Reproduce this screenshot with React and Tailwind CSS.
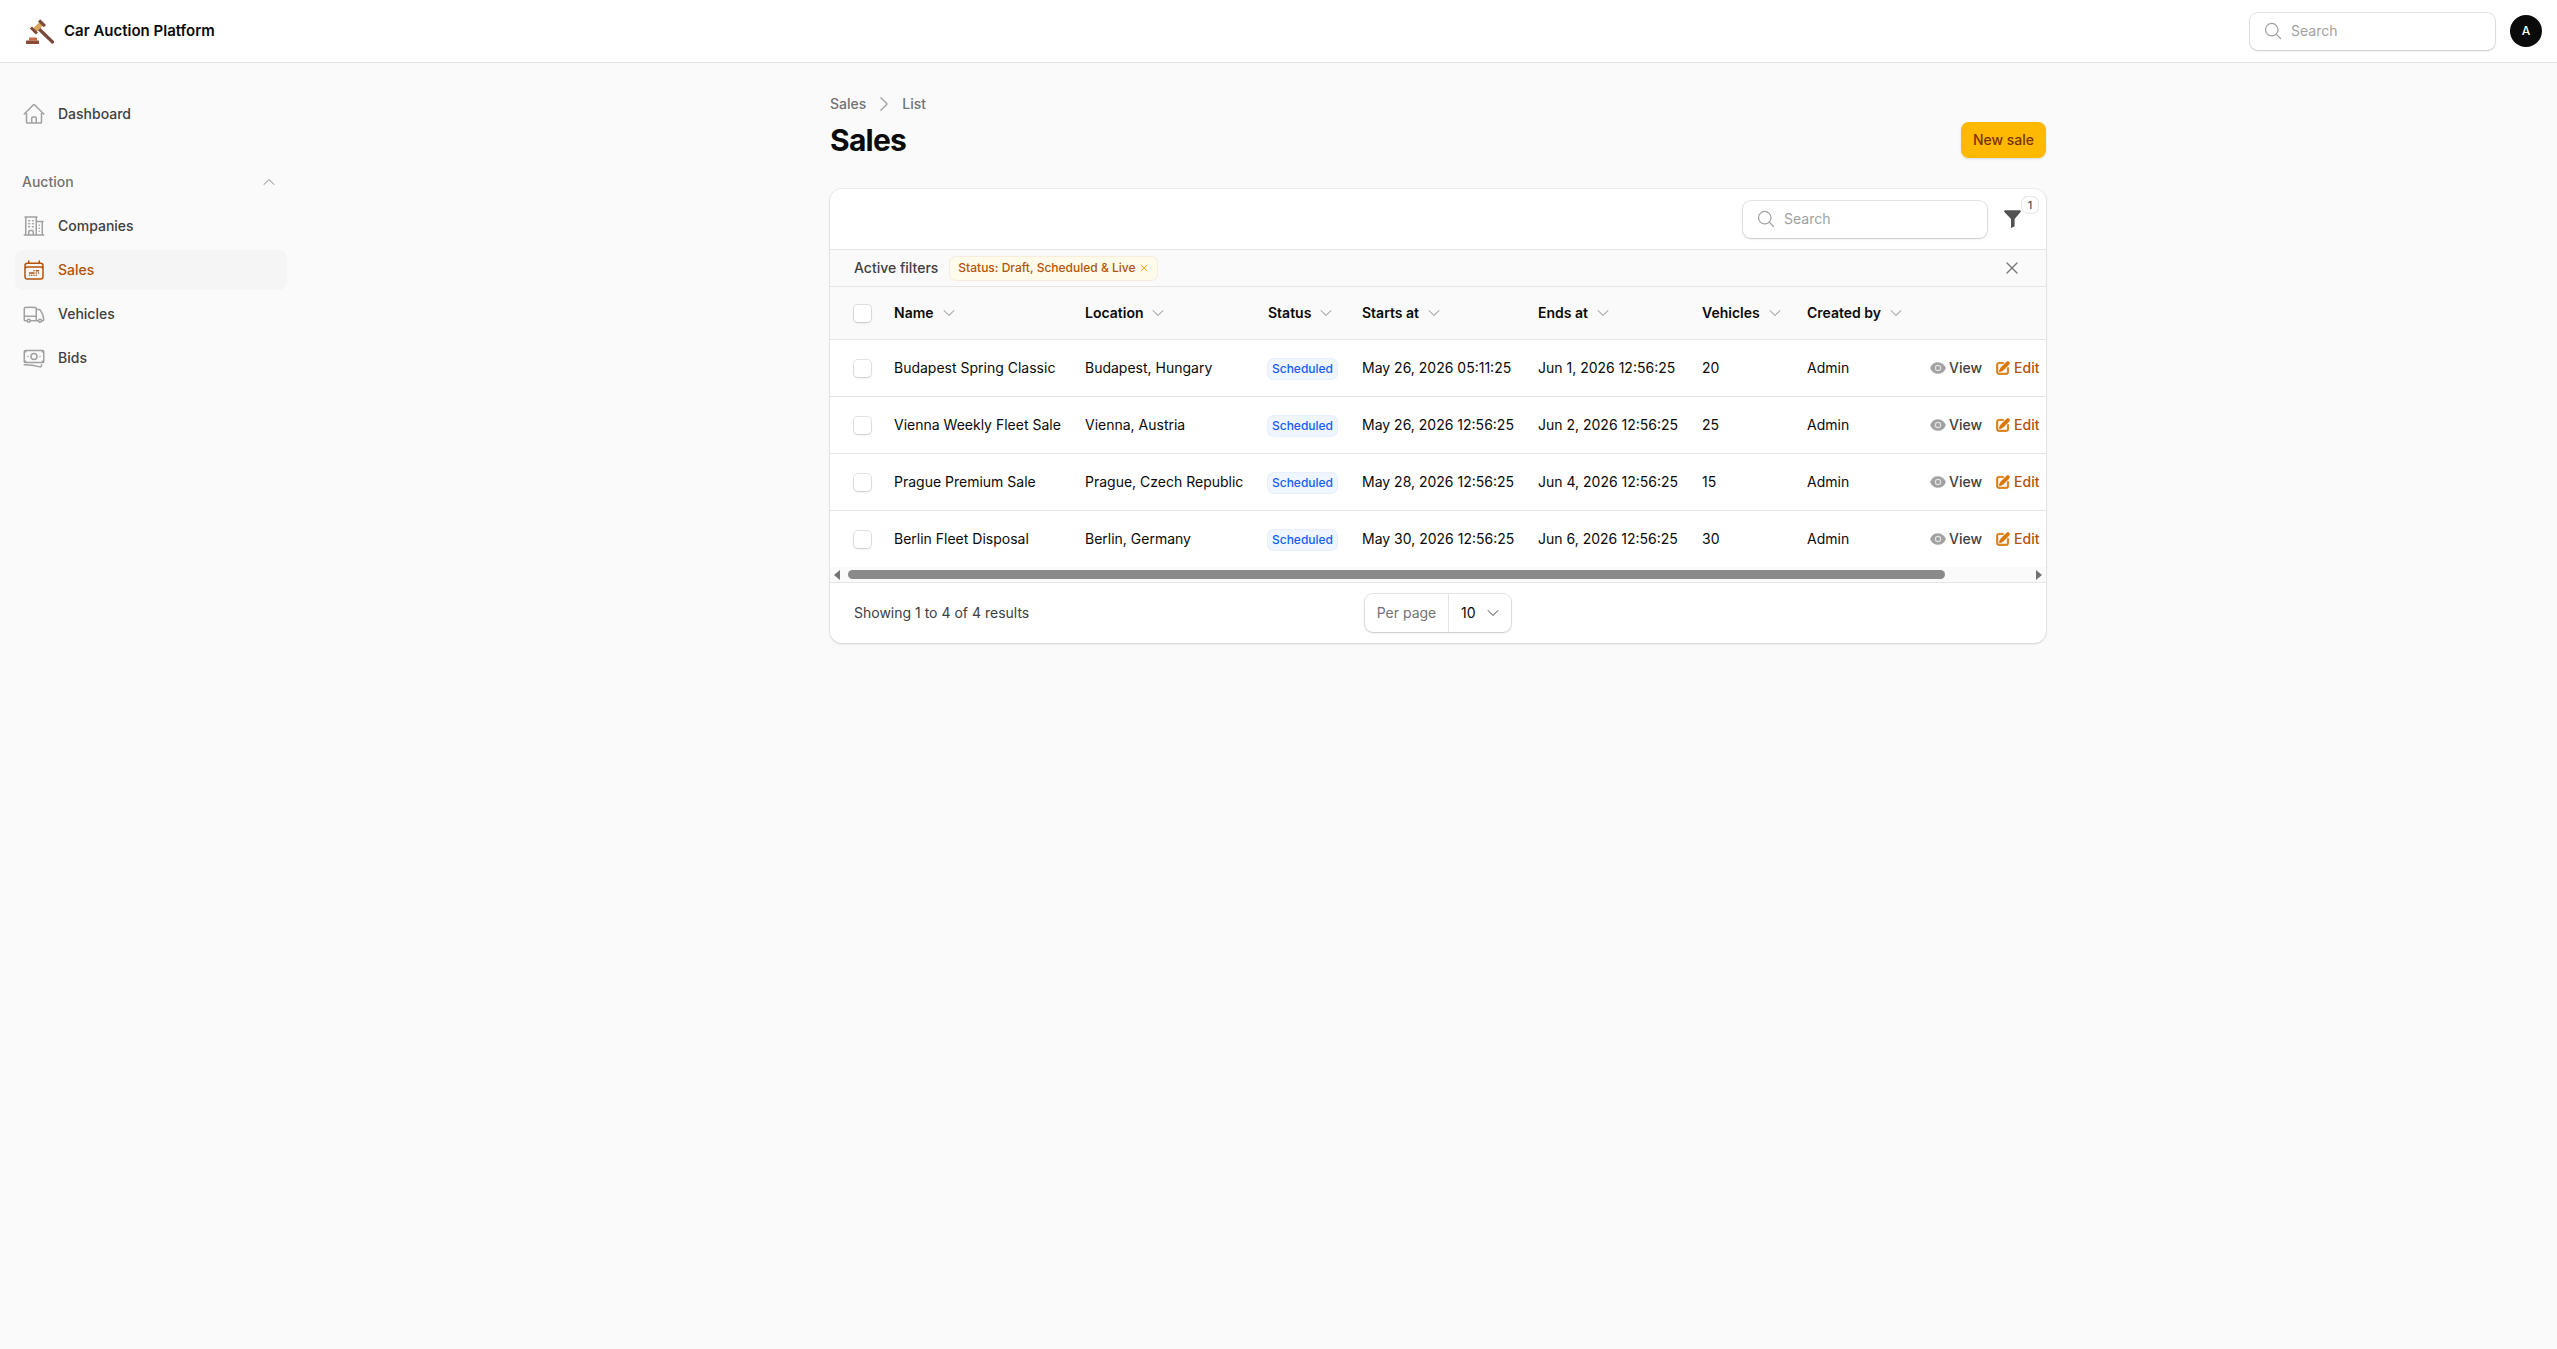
import React from "react";
import {
  HiOutlineHome,
  HiOutlineBuildingOffice2,
  HiOutlineCalendarDateRange,
  HiOutlineTruck,
  HiOutlineBanknotes,
  HiOutlineMagnifyingGlass,
  HiOutlineXMark,
  HiChevronUp,
  HiChevronDown,
  HiChevronRight,
  HiMiniEye,
  HiMiniPencilSquare,
  HiXMark,
} from "react-icons/hi2";

const sales = [
  ["Budapest Spring Classic", "Budapest, Hungary", "May 26, 2026 05:11:25", "Jun 1, 2026 12:56:25", "20"],
  ["Vienna Weekly Fleet Sale", "Vienna, Austria", "May 26, 2026 12:56:25", "Jun 2, 2026 12:56:25", "25"],
  ["Prague Premium Sale", "Prague, Czech Republic", "May 28, 2026 12:56:25", "Jun 4, 2026 12:56:25", "15"],
  ["Berlin Fleet Disposal", "Berlin, Germany", "May 30, 2026 12:56:25", "Jun 6, 2026 12:56:25", "30"],
];

const columns = ["Name", "Location", "Status", "Starts at", "Ends at", "Vehicles", "Created by"];

const GavelLogo = () => (
  <svg width="28" height="25" viewBox="0 0 28 25">
    <path d="M12.5 9.5 L26.5 23" stroke="#7b4a3c" strokeWidth="3.2" strokeLinecap="round" />
    <path d="M6 10.5 L14.5 2 L18 5.5 L9.5 14 Z" fill="#d9a45b" />
    <path d="M3.8 9.6 L6 7.4 L12 13.4 L9.8 15.6 Z" fill="#7b4a3c" />
    <path d="M12 2.4 L14.2 0.2 L20 6 L17.8 8.2 Z" fill="#7b4a3c" />
    <rect x="3" y="18.5" width="8" height="3" rx="0.5" fill="#c76a45" />
    <rect x="0" y="21.5" width="13" height="3.5" rx="0.5" fill="#8f4a36" />
  </svg>
);

const FunnelIcon = () => (
  <svg width="17" height="18" viewBox="0 0 17 18" className="text-neutral-600">
    <path
      d="M0.8 0.3 H16.2 Q17.2 0.8 16.6 2 L10.6 9 V16.4 L7 18 V9 L0.4 2 Q-0.2 0.8 0.8 0.3 Z"
      fill="currentColor"
    />
  </svg>
);

const NavItem = ({ icon: Icon, label, active }) => (
  <a
    className={`flex h-10 items-center gap-3 rounded-lg px-[7px] text-sm font-medium ${
      active ? "bg-[#f5f5f5] text-[#b45309]" : "text-neutral-700"
    }`}
  >
    <Icon className={`size-6 ${active ? "text-[#b45309]" : "text-neutral-400"}`} />
    {label}
  </a>
);

const SearchBox = ({ className }) => (
  <div
    className={`flex items-center gap-2 rounded-lg bg-white pl-[13px] shadow-sm ring-1 ring-neutral-950/10 ${className}`}
  >
    <HiOutlineMagnifyingGlass className="size-5 text-neutral-400" />
    <span className="text-sm text-neutral-400">Search</span>
  </div>
);

const Checkbox = () => (
  <span className="block size-[17px] translate-y-px rounded bg-white shadow-sm ring-1 ring-neutral-950/10" />
);

export default function App() {
  return (
    <div className="flex h-[1349px] flex-col overflow-hidden bg-[#fafafa] font-[Inter,sans-serif] text-neutral-950">
      <header className="flex h-[63px] shrink-0 items-center border-b border-neutral-200 bg-white pr-[15px] pl-[26px]">
        <GavelLogo />
        <span className="ml-[10px] text-[15px] font-semibold">Car Auction Platform</span>
        <SearchBox className="ml-auto h-[37px] w-[245px]" />
        <div className="ml-[15px] flex size-8 items-center justify-center rounded-full bg-neutral-950 text-xs font-medium text-white">
          A
        </div>
      </header>

      <div className="flex flex-1">
        <aside className="w-[318px] shrink-0 pt-[31px] pl-[15px]">
          <nav className="w-[272px]">
            <NavItem icon={HiOutlineHome} label="Dashboard" />
            <div className="mt-8 mb-2 flex h-8 items-center justify-between pr-[10px] pl-[7px] text-sm font-medium text-neutral-500">
              Auction
              <HiChevronUp className="size-4 text-neutral-400" />
            </div>
            <div className="flex flex-col gap-1">
              <NavItem icon={HiOutlineBuildingOffice2} label="Companies" />
              <NavItem icon={HiOutlineCalendarDateRange} label="Sales" active />
              <NavItem icon={HiOutlineTruck} label="Vehicles" />
              <NavItem icon={HiOutlineBanknotes} label="Bids" />
            </div>
          </nav>
        </aside>

        <main className="flex-1 pt-[31px] pl-[512px]">
          <div className="w-[1216px]">
            <div className="flex h-5 items-center gap-2 text-sm font-medium text-neutral-500">
              Sales
              <HiChevronRight className="size-5 text-neutral-400" />
              List
            </div>
            <div className="mt-2 flex h-9 items-center justify-between">
              <h1 className="text-3xl font-bold tracking-tight">Sales</h1>
              <button className="flex h-9 w-[85px] items-center justify-center rounded-lg bg-[#ffb900] text-sm font-medium text-amber-900 shadow-sm">
                New sale
              </button>
            </div>

            <section className="mt-[31px] overflow-hidden rounded-xl bg-white shadow-sm ring-1 ring-neutral-950/5">
              <div className="flex h-[61px] items-center justify-end border-b border-neutral-200 pr-[9px]">
                <SearchBox className="h-[37px] w-[244px]" />
                <div className="relative ml-[17px] flex h-[18px] w-[33px] items-center">
                  <FunnelIcon />
                  <span className="absolute top-[-13px] left-[18px] flex size-4 items-center justify-center rounded-md bg-white text-[11px] font-medium text-neutral-600 ring-1 ring-neutral-200">
                    1
                  </span>
                </div>
              </div>

              <div className="flex h-[37px] items-center border-b border-neutral-200 bg-[#fafafa] pr-[24px] pl-6">
                <span className="text-sm font-medium text-neutral-700">Active filters</span>
                <span className="ml-3 flex h-[23px] items-center gap-[3px] rounded-md bg-amber-50 pr-[7px] pl-2 text-xs font-medium text-[#b45309] ring-1 ring-amber-600/10">
                  Status: Draft, Scheduled &amp; Live
                  <HiXMark className="size-3 text-amber-500" />
                </span>
                <HiOutlineXMark className="ml-auto size-5 text-neutral-500" />
              </div>

              <table className="w-full table-fixed text-sm">
                <colgroup>
                  <col className="w-[64px]" />
                  <col className="w-[191px]" />
                  <col className="w-[183px]" />
                  <col className="w-[94px]" />
                  <col className="w-[176px]" />
                  <col className="w-[164px]" />
                  <col className="w-[105px]" />
                  <col className="w-[123px]" />
                  <col className="w-[116px]" />
                </colgroup>
                <thead>
                  <tr className="h-[52px] border-b border-neutral-200 bg-[#fafafa]">
                    <th className="pl-6">
                      <Checkbox />
                    </th>
                    {columns.map((c) => (
                      <th key={c} className="text-left font-semibold">
                        <span className="flex items-center gap-[7px]">
                          {c}
                          <HiChevronDown className="size-4 text-neutral-400" />
                        </span>
                      </th>
                    ))}
                    <th />
                  </tr>
                </thead>
                <tbody>
                  {sales.map((s, i) => (
                    <tr key={s[0]} className={`h-[57px] ${i < 3 ? "border-b border-neutral-200" : ""}`}>
                      <td className="pl-6">
                        <Checkbox />
                      </td>
                      <td>{s[0]}</td>
                      <td>{s[1]}</td>
                      <td>
                        <span className="inline-flex h-5 w-[69px] translate-y-px items-center justify-center rounded-md bg-blue-50 text-xs font-medium text-blue-600 ring-1 ring-blue-600/10">
                          Scheduled
                        </span>
                      </td>
                      <td>{s[2]}</td>
                      <td>{s[3]}</td>
                      <td>{s[4]}</td>
                      <td>Admin</td>
                      <td>
                        <div className="flex items-center font-medium">
                          <HiMiniEye className="size-4 stroke-neutral-400 stroke-[0.5] text-neutral-400" />
                          <span className="ml-[3px] text-neutral-700">View</span>
                          <HiMiniPencilSquare className="ml-[13px] size-4 stroke-[#d97706] stroke-[1] text-[#d97706]" />
                          <span className="ml-[3px] text-[#b45309]">Edit</span>
                        </div>
                      </td>
                    </tr>
                  ))}
                </tbody>
              </table>

              {/* fake classic scrollbar */}
              <div className="flex h-[16px] items-center border-b border-neutral-200 bg-[#fafafa] pr-[4px] pl-[4px]">
                <span className="h-0 w-0 border-y-[5px] border-r-[6px] border-y-transparent border-r-neutral-500" />
                <span className="ml-[8px] h-[9px] w-[1097px] rounded-full bg-[#8a8a8a]" />
                <span className="ml-auto h-0 w-0 border-y-[5px] border-l-[6px] border-y-transparent border-l-neutral-500" />
              </div>

              <div className="relative flex h-[60px] items-center px-6">
                <span className="text-sm text-neutral-700">Showing 1 to 4 of 4 results</span>
                <div className="absolute top-[11px] left-[535px] flex h-[38px] w-[146px] items-center rounded-lg bg-white text-sm shadow-sm ring-1 ring-neutral-950/10">
                  <span className="flex h-full w-[84px] items-center justify-center border-r border-neutral-200 text-neutral-500">
                    Per page
                  </span>
                  <span className="ml-3">10</span>
                  <HiChevronDown className="mr-[10px] ml-auto size-4 text-neutral-500" />
                </div>
              </div>
            </section>
          </div>
        </main>
      </div>
    </div>
  );
}
